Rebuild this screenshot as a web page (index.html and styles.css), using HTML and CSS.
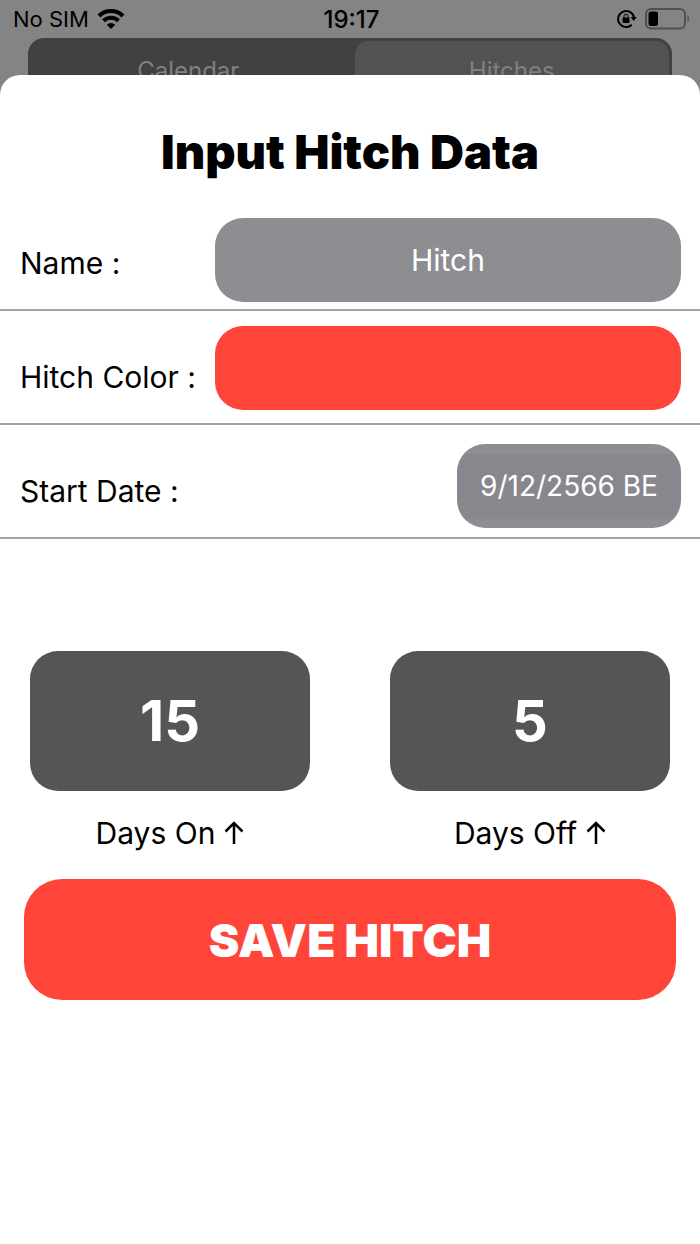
FILE: index.html
```html
<!DOCTYPE html>
<html lang="en">
<head>
<meta charset="utf-8">
<meta name="viewport" content="width=device-width, initial-scale=1">
<title>Input Hitch Data</title>
<link rel="stylesheet" href="styles.css">
</head>
<body>
<div class="screen">
  <div class="backdrop">
    <header class="status">
      <div class="status-left">
        <span>No SIM</span>
        <svg class="wifi" viewBox="0 0 28 20" aria-hidden="true">
          <path d="M14 20l4.200-4.300a6 6 0 0 0-8.400 0z"/>
          <path class="arc" d="M2 7a17.200 17.200 0 0 1 24 0M6.500 11.700a10.800 10.800 0 0 1 15 0"/>
        </svg>
      </div>
      <time class="clock">19:17</time>
      <div class="status-right">
        <svg class="lock" viewBox="0 0 20 20" aria-hidden="true">
          <path class="ring" d="M14.800 15.700A8 8 0 1 1 17 8.500"/>
          <path d="M13.600 8h6.200l-3.100 4z"/>
          <rect x="5.500" y="8.500" width="7" height="5.500" rx="1"/>
          <path class="shackle" d="M7 9V7.200a2 2 0 0 1 4 0V9"/>
        </svg>
        <svg class="battery" viewBox="0 0 45 22" aria-hidden="true">
          <rect class="case" x="1" y="1" width="39" height="19.500" rx="5"/>
          <path class="cap" d="M42.500 7.500c2 1 2 5.500 0 6.500z"/>
          <rect x="3.500" y="3.500" width="9.500" height="14.500" rx="2.500"/>
        </svg>
      </div>
    </header>
    <div class="segments">
      <button class="segment" type="button">Calendar</button>
      <button class="segment selected" type="button">Hitches</button>
    </div>
  </div>

  <main class="sheet">
    <h1 class="title">Input Hitch Data</h1>
    <form class="form">
      <div class="row row-name">
        <label class="label" for="name">Name :</label>
        <input class="field" id="name" type="text" value="Hitch">
      </div>
      <div class="row row-color">
        <label class="label" for="color">Hitch Color :</label>
        <button class="field swatch" id="color" type="button"></button>
      </div>
      <div class="row row-date">
        <label class="label" for="start">Start Date :</label>
        <input class="field date" id="start" type="text" value="9/12/2566 BE">
      </div>
      <div class="counts">
        <div class="count">
          <input class="number" id="on" type="text" inputmode="numeric" value="15">
          <label class="caption" for="on">Days On
            <svg class="arrow" viewBox="0 0 20 24" aria-hidden="true"><path stroke-width="2.500" d="M10 23V2M1.500 10.500L10 2l8.500 8.500"/></svg>
          </label>
        </div>
        <div class="count">
          <input class="number" id="off" type="text" inputmode="numeric" value="5">
          <label class="caption" for="off">Days Off
            <svg class="arrow" viewBox="0 0 20 24" aria-hidden="true"><path stroke-width="2.500" d="M10 23V2M1.500 10.500L10 2l8.500 8.500"/></svg>
          </label>
        </div>
      </div>
      <button class="save" type="button">SAVE HITCH</button>
    </form>
  </main>
</div>
</body>
</html>
```
FILE: styles.css
```css
* {
  box-sizing: border-box;
}

body {
  margin: 0;
  background: #848484;
  color: #000;
  font-family: Inter, "Liberation Sans", sans-serif;
}

button,
input {
  margin: 0;
  padding: 0;
  border: 0;
  font: inherit;
}

.screen {
  display: grid;
  min-height: 100vh;
}

.backdrop,
.sheet {
  grid-area: 1 / 1;
  min-width: 0;
}

.status {
  display: grid;
  grid-template-columns: 1fr auto 1fr;
  align-items: center;
  height: 38px;
  padding: 0 10px 0 13px;
  font-size: 22px;
}

.status-left,
.status-right {
  display: flex;
  align-items: center;
  gap: 8px;
}

.status-right {
  justify-content: flex-end;
}

.clock {
  font-size: 24px;
  font-weight: 500;
}

.wifi {
  width: 28px;
  height: 20px;
}

.arc,
.ring,
.shackle,
.case {
  fill: none;
  stroke: #000;
}

.arc {
  stroke-width: 4;
}

.lock {
  width: 20px;
  height: 20px;
}

.ring {
  stroke-width: 2;
}

.battery {
  width: 45px;
  height: 22px;
}

.case {
  stroke: #505050;
  stroke-width: 2;
}

.cap {
  fill: #505050;
}

.segments {
  display: grid;
  grid-template-columns: 1fr 1fr;
  gap: 9px;
  height: 64px;
  margin: 0 28px;
  padding: 3px;
  border-radius: 16px;
  background: #414141;
}

.segment {
  border-radius: 13px;
  background: none;
  color: #808080;
  font-size: 24px;
}

.selected {
  background: #525254;
}

.sheet {
  margin-top: 75px;
  padding-bottom: 40px;
  border-radius: 20px 20px 0 0;
  background: #fff;
}

.title {
  margin: 0;
  padding: 49px 20px 17px;
  font-size: 47px;
  font-weight: 900;
  line-height: 56px;
  text-align: center;
}

.row {
  display: flex;
  align-items: flex-start;
  justify-content: space-between;
  gap: 20px;
  height: 114px;
  padding: 0 19px 0 20px;
  border-bottom: 2px solid #a4a4a4;
  font-size: 30px;
}

.row-name {
  padding-top: 21px;
}

.row-color {
  padding-top: 15px;
}

.row-date {
  padding-top: 19px;
}

.label {
  flex: 0 0 175px;
  align-self: flex-end;
  min-width: 0;
  padding-bottom: 28px;
  line-height: 36px;
  white-space: nowrap;
}

.field {
  flex: 1;
  min-width: 0;
  height: 84px;
  border-radius: 28px;
  background: #8e8d92;
  color: #fff;
  text-align: center;
}

.swatch {
  background: #ff453a;
}

.date {
  flex: 0 0 32%;
  flex-basis: 224px;
  background: linear-gradient(#8e8d92 10px, #88878d 10px, #88878d 75px, #8e8d92 75px);
  font-size: 28px;
}

.counts {
  display: grid;
  grid-template-columns: 1fr 1fr;
  gap: 80px;
  padding: 112px 30px 28px;
}

.count {
  display: grid;
  gap: 24px;
}

.number {
  width: 100%;
  height: 140px;
  border-radius: 28px;
  background: #555;
  color: #fff;
  font-size: 56px;
  font-weight: 700;
  text-align: center;
}

.caption {
  display: flex;
  align-items: center;
  justify-content: center;
  gap: 9px;
  font-size: 30px;
  line-height: 36px;
}

.arrow {
  width: 20px;
  height: 24px;
  fill: none;
  stroke: #000;
}

.save {
  display: block;
  width: calc(100% - 48px);
  height: 121px;
  margin: 0 24px;
  border-radius: 38px;
  background: #ff453a;
  color: #fff;
  font-size: 46px;
  font-weight: 900;
}
```
